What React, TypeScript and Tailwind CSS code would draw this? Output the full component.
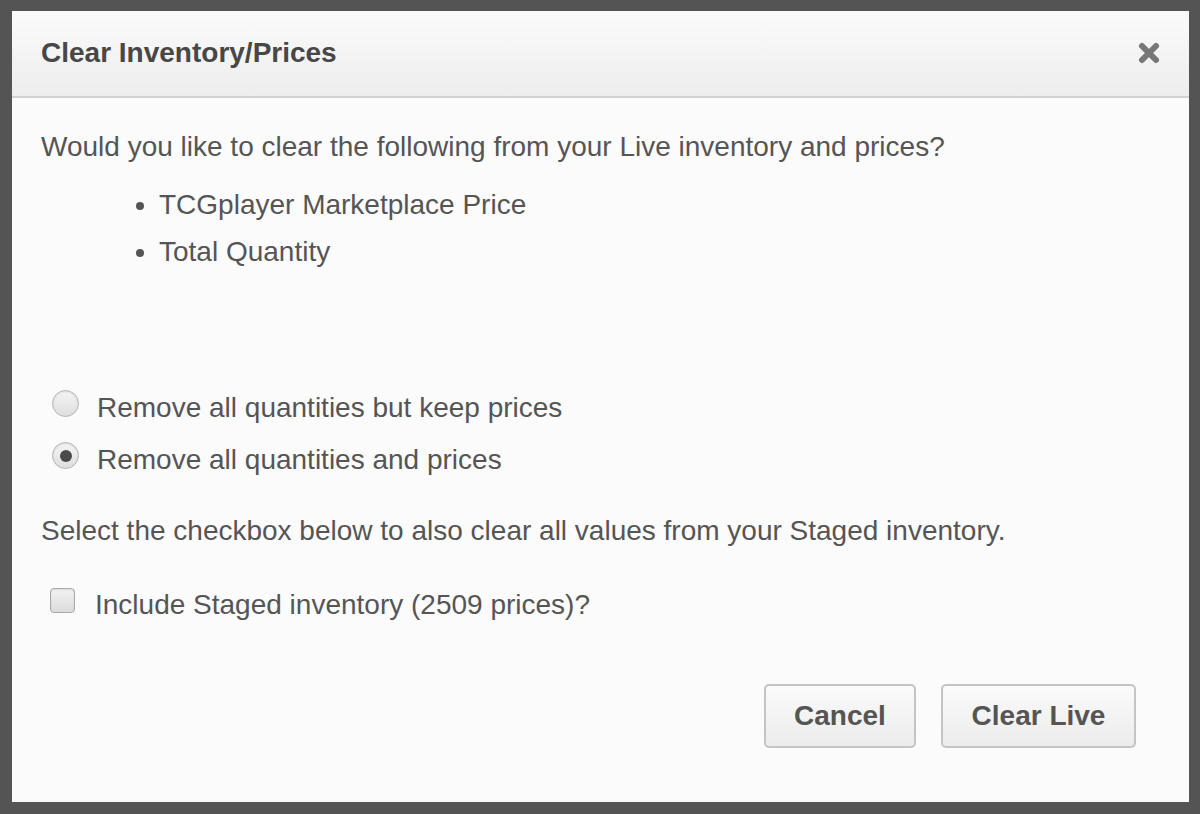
import React, { useState } from 'react';

const font = "font-['Liberation_Sans',Arial,sans-serif]";

const Radio: React.FC<{ checked: boolean; label: string; onClick: () => void }> = ({ checked, label, onClick }) => (
  <div className="flex items-center h-[52px] cursor-pointer" onClick={onClick}>
    <span className="ml-[11px] w-[27px] h-[27px] rounded-full border border-[#b4b4b4] bg-gradient-to-b from-[#f4f4f4] to-[#dedede] shadow-[inset_0_1px_2px_rgba(0,0,0,0.1)] flex items-center justify-center -mt-[9px]">
      {checked && <span className="w-[12px] h-[12px] rounded-full bg-[#4a4a4a]" />}
    </span>
    <span className="ml-[18px] text-[28px] text-[#555]">{label}</span>
  </div>
);

export default function App() {
  const [mode, setMode] = useState<'keep' | 'all'>('all');
  const [staged, setStaged] = useState(false);

  return (
    <div className={`w-[1200px] h-[814px] bg-[#545454] pt-[11px] pl-[12px] pr-[11px] pb-[12px] ${font}`}>
      <div className="w-full h-full bg-[#fbfbfb] flex flex-col">
        <div className="h-[87px] shrink-0 border-b-2 border-[#d2d2d2] bg-gradient-to-b from-[#fbfbfb] to-[#ededed] flex items-center justify-between pl-[29px] pr-[28px]">
          <h1 className="text-[28px] font-bold text-[#474747] -mt-[2px]">Clear Inventory/Prices</h1>
          <svg width="24" height="24" viewBox="0 0 24 24" className="text-[#777] -mt-[2px]">
            <path d="M5 5 L19 19 M19 5 L5 19" stroke="currentColor" strokeWidth="6" strokeLinecap="round" />
          </svg>
        </div>

        <div className="flex-1 pl-[29px] pr-[53px] pt-[30px] text-[#555]">
          <p className="text-[28px] leading-[37px]">Would you like to clear the following from your Live inventory and prices?</p>
          <ul className="mt-[16px] pl-[118px] list-disc text-[28px] leading-[47px] marker:text-[#555]">
            <li>TCGplayer Marketplace Price</li>
            <li>Total Quantity</li>
          </ul>

          <div className="mt-[107px]">
            <Radio checked={mode === 'keep'} label="Remove all quantities but keep prices" onClick={() => setMode('keep')} />
            <Radio checked={mode === 'all'} label="Remove all quantities and prices" onClick={() => setMode('all')} />
          </div>

          <p className="mt-[26px] text-[28px] leading-[37px]">Select the checkbox below to also clear all values from your Staged inventory.</p>

          <div className="mt-[36px] flex items-center h-[40px] cursor-pointer" onClick={() => setStaged(!staged)}>
            <span className="ml-[9px] w-[25px] h-[25px] rounded-[4px] border border-[#a8a8a8] bg-gradient-to-b from-[#f2f2f2] to-[#dcdcdc] shadow-[inset_0_1px_2px_rgba(0,0,0,0.1)] -mt-[10px] flex items-center justify-center text-[18px] text-[#444]">
              {staged ? '✓' : ''}
            </span>
            <span className="ml-[20px] text-[28px]">Include Staged inventory (2509 prices)?</span>
          </div>

          <div className="mt-[59px] flex justify-end gap-[25px]">
            <button className="w-[152px] h-[64px] rounded-[5px] border-2 border-[#c4c4c4] bg-gradient-to-b from-[#fafafa] to-[#ececec] text-[28px] font-bold text-[#555]">Cancel</button>
            <button className="w-[195px] h-[64px] rounded-[5px] border-2 border-[#c4c4c4] bg-gradient-to-b from-[#fafafa] to-[#ececec] text-[28px] font-bold text-[#555]">Clear Live</button>
          </div>
        </div>
      </div>
    </div>
  );
}
